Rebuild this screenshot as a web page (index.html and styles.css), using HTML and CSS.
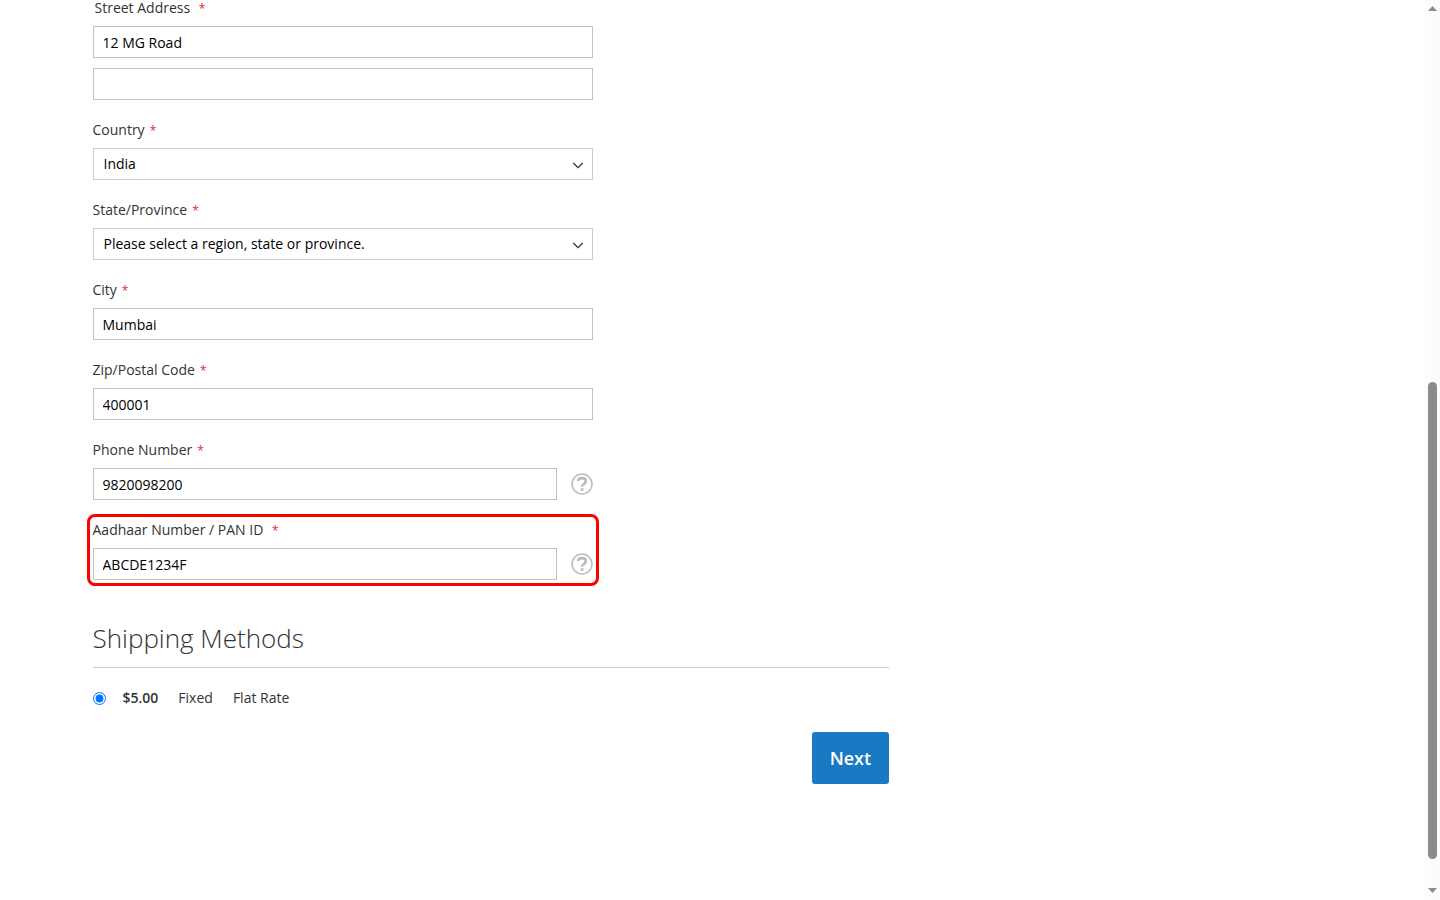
FILE: index.html
```html
<!DOCTYPE html>
<html lang="en">
    <head>
        <meta charset="utf-8">
        <title>Checkout</title>
        <link rel="stylesheet" href="styles.css">
    </head>
    <body>
        <main class="page-main">
            <div class="checkout-col">
                <form id="shipping">
                    <div class="address">
                        <fieldset class="field street">
                            <legend class="label">Street Address <span class="req">*</span></legend>
                            <input class="input-text" type="text" value="12 MG Road" aria-label="Street Address: Line 1">
                            <input class="input-text" type="text" aria-label="Street Address: Line 2">
                        </fieldset>
                        <div class="field">
                            <label class="label" for="country">Country<span class="req">*</span></label>
                            <div class="control">
                                <select class="select" id="country">
                                    <option>India</option>
                                </select>
                                <svg class="arrow" viewBox="0 0 12 8"><path d="M1.300 1l4.700 4.700L10.700 1"/></svg>
                            </div>
                        </div>
                        <div class="field">
                            <label class="label" for="region">State/Province<span class="req">*</span></label>
                            <div class="control">
                                <select class="select" id="region">
                                    <option>Please select a region, state or province.</option>
                                </select>
                                <svg class="arrow" viewBox="0 0 12 8"><path d="M1.300 1l4.700 4.700L10.700 1"/></svg>
                            </div>
                        </div>
                        <div class="field">
                            <label class="label" for="city">City<span class="req">*</span></label>
                            <input class="input-text" type="text" id="city" value="Mumbai">
                        </div>
                        <div class="field">
                            <label class="label" for="postcode">Zip/Postal Code<span class="req">*</span></label>
                            <input class="input-text" type="text" id="postcode" value="400001">
                        </div>
                        <div class="field">
                            <label class="label" for="phone">Phone Number<span class="req">*</span></label>
                            <div class="control with-help">
                                <input class="input-text" type="tel" id="phone" value="9820098200">
                                <button class="help" type="button" aria-label="Help">
                                    <svg viewBox="0 0 22 22"><circle cx="11" cy="11" r="10"/><path class="mark" d="M7 7.800C7.200 6 8.800 5.100 10.900 5.100c2.300 0 4 1.100 4 3.100 0 2.700-3.800 2.800-3.800 5.400"/><path class="mark" d="M11.100 15.100v2.800"/></svg>
                                </button>
                            </div>
                        </div>
                        <div class="field highlight">
                            <label class="label" for="taxid">Aadhaar Number / PAN ID <span class="req">*</span></label>
                            <div class="control with-help">
                                <input class="input-text" type="text" id="taxid" value="ABCDE1234F">
                                <button class="help" type="button" aria-label="Help">
                                    <svg viewBox="0 0 22 22"><circle cx="11" cy="11" r="10"/><path class="mark" d="M7 7.800C7.200 6 8.800 5.100 10.900 5.100c2.300 0 4 1.100 4 3.100 0 2.700-3.800 2.800-3.800 5.400"/><path class="mark" d="M11.100 15.100v2.800"/></svg>
                                </button>
                            </div>
                        </div>
                    </div>

                    <h2 class="step-title">Shipping Methods</h2>
                    <table class="methods">
                        <tbody>
                            <tr>
                                <td class="col-radio"><input type="radio" name="method" id="flatrate" aria-label="Flat Rate Fixed $5.00" checked></td>
                                <td class="col-price">$5.00</td>
                                <td><label for="flatrate">Fixed</label></td>
                                <td><label for="flatrate">Flat Rate</label></td>
                            </tr>
                        </tbody>
                    </table>
                    <div class="actions">
                        <button class="next" type="submit">Next</button>
                    </div>
                </form>
            </div>
        </main>
        <div class="scrollbar" aria-hidden="true">
            <svg class="scroll-arrow" viewBox="0 0 9 5"><path d="M0 5L4.500 0 9 5z"/></svg>
            <div class="track">
                <div class="thumb"></div>
            </div>
            <svg class="scroll-arrow" viewBox="0 0 9 5"><path d="M0 0l4.500 5L9 0z"/></svg>
        </div>
    </body>
</html>
```

FILE: styles.css
```css
* {
    box-sizing: border-box;
}
body {
    margin: 0;
    display: flex;
    height: 100vh;
    overflow: hidden;
    background-color: #fff;
    color: #333;
    font-family: "Open Sans", "Liberation Sans", sans-serif;
    font-size: 14px;
    line-height: 20px;
}
.page-main {
    flex: 1;
    max-width: 1280px;
    margin: -2px auto 0;
    padding: 0 20px;
}
.checkout-col {
    width: 66.6667%;
    padding-right: 30px;
}
.address {
    max-width: 500px;
    display: flex;
    flex-direction: column;
    gap: 20px;
}
.field {
    margin: 0;
    padding: 0;
    border: 0;
    min-width: 0;
}
.label {
    display: block;
    margin-bottom: 8px;
    padding: 0;
}
.street .label {
    padding-left: 2px;
}
.street .input-text + .input-text {
    margin-top: 10px;
}
.req {
    margin-left: 5px;
    color: #e02b27;
    font-size: 12px;
    line-height: 1;
}
.control {
    position: relative;
}
.input-text,
.select {
    display: block;
    width: 100%;
    height: 32px;
    border: 1px solid #c2c2c2;
    border-radius: 0;
    background-color: #fff;
    color: #000;
    font-family: inherit;
    font-size: 14px;
}
.input-text {
    padding: 0 9px;
}
.select {
    appearance: none;
    border-color: #ccc;
    padding: 0 30px 2px 10px;
}
.arrow {
    position: absolute;
    right: 9px;
    top: 14px;
    width: 12px;
    height: 8px;
    fill: none;
    stroke: #333;
    stroke-width: 1.3;
    pointer-events: none;
}
.with-help {
    display: flex;
    align-items: center;
    gap: 14px;
}
.with-help .input-text {
    flex: 1;
    min-width: 0;
}
.help {
    width: 22px;
    height: 22px;
    padding: 0;
    border: 0;
    background: none;
    cursor: pointer;
}
.help svg {
    display: block;
    fill: none;
    stroke: #bbb;
    stroke-width: 1.5;
}
.help .mark {
    stroke-width: 2.6;
}
.highlight {
    position: relative;
}
.highlight::after {
    content: "";
    position: absolute;
    inset: -6px;
    border: 3px solid #f00;
    border-radius: 8px;
    pointer-events: none;
}
.step-title {
    margin: 44px 0 20px;
    padding-bottom: 15px;
    border-bottom: 1px solid #ccc;
    font-size: 26px;
    font-weight: 300;
    line-height: 28px;
}
.methods {
    border-collapse: collapse;
}
.methods td {
    padding: 0 20px 0 0;
}
.methods .col-radio {
    padding-right: 17px;
}
.methods input {
    display: block;
    width: 13px;
    height: 13px;
    margin: 0;
}
.col-price {
    font-weight: 600;
}
.actions {
    display: flex;
    justify-content: flex-end;
    margin-top: 24px;
}
.next {
    padding: 13px 18px;
    border: 0;
    border-radius: 3px;
    background-color: #1979c3;
    color: #fff;
    font-family: inherit;
    font-size: 18px;
    font-weight: 600;
    line-height: 26px;
    cursor: pointer;
}
.scrollbar {
    width: 15px;
    padding: 6px 3px 7px;
    display: flex;
    flex-direction: column;
    background-color: #fcfcfc;
}
.scroll-arrow {
    width: 9px;
    height: 5px;
    fill: #8b8b8b;
}
.track {
    flex: 1;
    display: flex;
    flex-direction: column;
    justify-content: flex-end;
    padding-bottom: 29px;
}
.thumb {
    height: 56.2%;
    border-radius: 5px;
    background-color: #8b8b8b;
}
```
